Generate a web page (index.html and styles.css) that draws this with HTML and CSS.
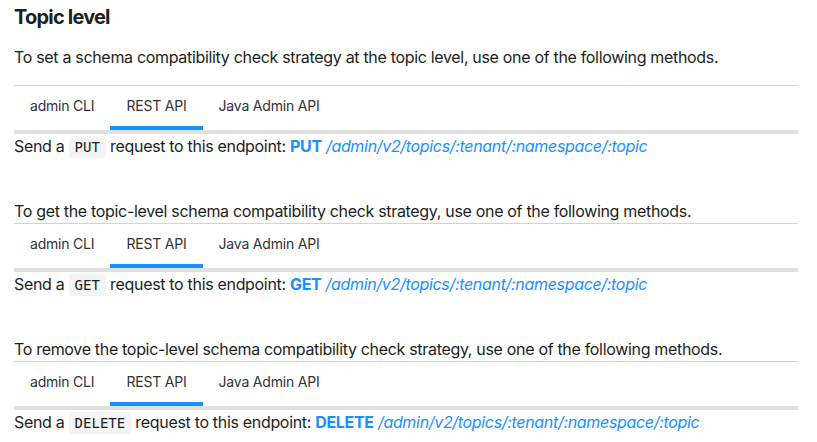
FILE: index.html
```html
<!DOCTYPE html>
<html lang="en">
<head>
<meta charset="utf-8">
<link rel="stylesheet" href="styles.css">
</head>
<body>
<main class="doc">
  <h2 class="title">Topic level</h2>
  <p class="intro first">To set a schema compatibility check strategy at the topic level, use one of the following methods.</p>
  <div class="tabs">
    <ul class="tab-list">
      <li class="tab">admin CLI</li>
      <li class="tab active">REST API</li>
      <li class="tab">Java Admin API</li>
    </ul>
    <p class="send">Send a <code>PUT</code> request to this endpoint: <a class="ep"><b>PUT</b> <i>/admin/v2/topics/:tenant/:namespace/:topic</i></a></p>
  </div>

  <p class="intro">To get the topic-level schema compatibility check strategy, use one of the following methods.</p>
  <div class="tabs">
    <ul class="tab-list">
      <li class="tab">admin CLI</li>
      <li class="tab active">REST API</li>
      <li class="tab">Java Admin API</li>
    </ul>
    <p class="send">Send a <code>GET</code> request to this endpoint: <a class="ep"><b>GET</b> <i>/admin/v2/topics/:tenant/:namespace/:topic</i></a></p>
  </div>

  <p class="intro">To remove the topic-level schema compatibility check strategy, use one of the following methods.</p>
  <div class="tabs">
    <ul class="tab-list">
      <li class="tab">admin CLI</li>
      <li class="tab active">REST API</li>
      <li class="tab">Java Admin API</li>
    </ul>
    <p class="send">Send a <code>DELETE</code> request to this endpoint: <a class="ep"><b>DELETE</b> <i>/admin/v2/topics/:tenant/:namespace/:topic</i></a></p>
  </div>
</main>
</body>
</html>
```
FILE: styles.css
```css
html, body {
  margin: 0;
  padding: 0;
  background: #ffffff;
}

body {
  font-family: Inter, "Noto Sans", "Liberation Sans", sans-serif;
  color: #1c1e21;
  font-size: 16px;
  line-height: 24px;
  letter-spacing: -0.32px;
}

.doc {
  width: 784px;
  padding: 0 0 0 14px;
}

.title {
  margin: 0;
  padding-top: 5px;
  font-size: 20px;
  line-height: 25px;
  font-weight: 700;
  letter-spacing: -0.8px;
  color: #1c1e21;
}

.intro {
  margin: 40px 0 0;
  line-height: 24px;
}

.intro.first {
  margin-top: 15px;
  margin-bottom: 16px;
}

.tabs {
  border-top: 1px solid #d3d3d3;
}

.tab-list {
  list-style: none;
  margin: 0;
  padding: 0;
  display: flex;
  border-bottom: 4px solid #e0e0e0;
}

.tab {
  height: 40px;
  line-height: 40px;
  padding: 0 16px;
  font-size: 14px;
  letter-spacing: -0.2px;
  color: #303236;
  border-bottom: 4px solid transparent;
}

.tab.active {
  border-bottom-color: #1890ff;
}

.send {
  margin: 0;
  line-height: 24px;
}

code {
  font-family: "DejaVu Sans Mono", "Liberation Mono", monospace;
  font-size: 14px;
  letter-spacing: 0;
  background: #f3f4f5;
  border-radius: 4px;
  padding: 3px 6px;
  color: #1c1e21;
}

.ep {
  color: #1890ff;
}

.ep b {
  font-weight: 700;
}
```
